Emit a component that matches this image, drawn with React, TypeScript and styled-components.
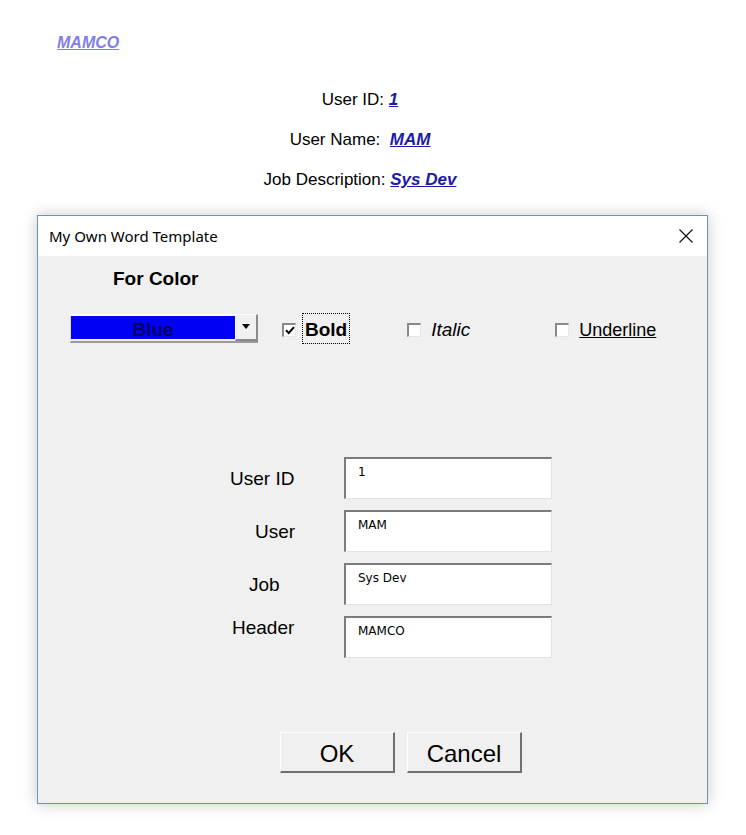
import * as React from 'react'
import styled, { createGlobalStyle } from 'styled-components'

const GlobalStyle = createGlobalStyle`
  html, body {
    margin: 0;
    padding: 0;
    background: #ffffff;
  }
  body {
    font-family: "Liberation Sans", Arial, sans-serif;
    color: #000;
  }
`

const Page = styled.div`
  width: 746px;
  height: 835px;
  overflow: hidden;
`

const Brand = styled.a`
  display: inline-block;
  margin: 33px 0 0 57px;
  line-height: 20px;
  font-size: 16px;
  font-weight: bold;
  font-style: italic;
  color: #7f7fe6;
  text-decoration: underline;
  cursor: pointer;
`

const InfoList = styled.div`
  margin-top: 27px;
  display: flex;
  flex-direction: column;
  align-items: center;
  padding-right: 26px;
`

const InfoLine = styled.div`
  line-height: 40px;
  font-size: 17px;
`

const InfoValue = styled.a`
  color: #1b1ba8;
  font-weight: bold;
  font-style: italic;
  text-decoration: underline;
`

const Dialog = styled.div`
  margin: 15px 0 0 37px;
  width: 669px;
  height: 587px;
  border: 1px solid #6f93b8;
  box-shadow: 0 0 14px rgba(0, 0, 0, 0.22);
  display: flex;
  flex-direction: column;
  background: #f0f0f0;
`

const TitleBar = styled.div`
  height: 40px;
  flex: none;
  background: #ffffff;
  display: flex;
  align-items: center;
  justify-content: space-between;
  padding: 0 13px 0 11px;
  font-family: "Noto Sans", "Open Sans", sans-serif;
  font-size: 15px;
`

const CloseButton = styled.button`
  border: 0;
  background: transparent;
  padding: 0;
  width: 16px;
  height: 16px;
  display: flex;
  cursor: pointer;
`

const DialogBody = styled.div`
  flex: 1;
  display: flex;
  flex-direction: column;
`

const ColorHeading = styled.div`
  margin: 11px 0 0 75px;
  line-height: 24px;
  font-size: 19px;
  font-weight: bold;
`

const OptionsRow = styled.div`
  margin-top: 20px;
  height: 34px;
  display: flex;
  align-items: center;
`

const ComboBox = styled.div`
  margin-left: 32px;
  width: 188px;
  height: 29px;
  box-sizing: border-box;
  display: flex;
  border-top: 2px solid #ffffff;
  border-left: 1px solid #d8d8d8;
  border-bottom: 2px solid #9a9a9a;
`

const ComboValue = styled.div`
  flex: 1;
  height: 23px;
  background: #0000f5;
  color: #000068;
  font-size: 19px;
  font-weight: bold;
  text-align: center;
  line-height: 27px;
  overflow: hidden;
`

const ComboArrow = styled.div`
  width: 23px;
  height: 27px;
  margin-top: -2px;
  box-sizing: border-box;
  background: #f0f0f0;
  border-top: 1px solid #ffffff;
  border-left: 1px solid #ffffff;
  border-right: 2px solid #8a8a8a;
  border-bottom: 2px solid #8a8a8a;
  display: flex;
  align-items: center;
  justify-content: center;
`

const Option = styled.label<{ $gap: number }>`
  margin-left: ${p => p.$gap}px;
  display: flex;
  align-items: center;
  cursor: default;
`

const Box = styled.span`
  width: 14px;
  height: 14px;
  box-sizing: border-box;
  background: #ffffff;
  border-top: 2px solid #8a8a8a;
  border-left: 2px solid #8a8a8a;
  border-right: 1px solid #e6e6e6;
  border-bottom: 1px solid #e6e6e6;
  display: flex;
  align-items: center;
  justify-content: center;
  margin-top: 3px;
`

const OptionText = styled.span<{ $variant: 'bold' | 'italic' | 'underline'; $focused?: boolean }>`
  margin-left: ${p => (p.$focused ? 6 : 7)}px;
  font-size: ${p => (p.$variant === 'underline' ? 18 : 19)}px;
  line-height: 26px;
  padding: 3px 2px 0;
  font-weight: ${p => (p.$variant === 'bold' ? 'bold' : 'normal')};
  font-style: ${p => (p.$variant === 'italic' ? 'italic' : 'normal')};
  text-decoration: ${p => (p.$variant === 'underline' ? 'underline' : 'none')};
  border: 1px dotted ${p => (p.$focused ? '#000' : 'transparent')};
`

const Form = styled.div`
  margin-top: 112px;
  display: grid;
  grid-template-columns: 306px 208px;
  grid-auto-rows: 43px;
  row-gap: 10px;
`

const FieldLabel = styled.label<{ $left: number; $top?: boolean }>`
  padding-left: ${p => p.$left}px;
  align-self: ${p => (p.$top ? 'start' : 'center')};
  font-size: 19px;
  line-height: 24px;
  margin-top: ${p => (p.$top ? '0' : '1px')};
`

const TextField = styled.input`
  box-sizing: border-box;
  width: 208px;
  height: 42px;
  margin: 0;
  background: #ffffff;
  border-top: 2px solid #7c7c7c;
  border-left: 2px solid #7c7c7c;
  border-right: 1px solid #e2e2e2;
  border-bottom: 1px solid #e2e2e2;
  padding: 0 12px 14px;
  font-family: "DejaVu Sans", Tahoma, sans-serif;
  font-size: 12px;
  color: #000;
  outline: none;
`

const ButtonRow = styled.div`
  margin: 73px 0 0 242px;
  display: flex;
  gap: 12px;
`

const DialogButton = styled.button`
  width: 115px;
  height: 41px;
  box-sizing: border-box;
  background: #f0f0f0;
  border-top: 1px solid #ffffff;
  border-left: 1px solid #ffffff;
  border-right: 2px solid #707070;
  border-bottom: 2px solid #707070;
  font-family: "Liberation Sans", Arial, sans-serif;
  font-size: 24px;
  line-height: 24px;
  padding: 4px 0 0;
  color: #000;
  cursor: pointer;
`

const fields = [
  { label: 'User ID', value: '1', left: 192 },
  { label: 'User', value: 'MAM', left: 217 },
  { label: 'Job', value: 'Sys Dev', left: 211 },
  { label: 'Header', value: 'MAMCO', left: 194, top: true },
]

export default function App() {
  const [bold, setBold] = React.useState(true)
  const [italic, setItalic] = React.useState(false)
  const [underline, setUnderline] = React.useState(false)

  const check = (
    <svg width="10" height="9" viewBox="0 0 10 9">
      <path d="M1 4.2 L3.8 7 L9 1.2" fill="none" stroke="#000" strokeWidth="2" />
    </svg>
  )

  return (
    <Page>
      <GlobalStyle />
      <Brand>MAMCO</Brand>
      <InfoList>
        <InfoLine>
          User ID: <InfoValue>1</InfoValue>
        </InfoLine>
        <InfoLine>
          User Name:&nbsp; <InfoValue>MAM</InfoValue>
        </InfoLine>
        <InfoLine>
          Job Description: <InfoValue>Sys Dev</InfoValue>
        </InfoLine>
      </InfoList>

      <Dialog>
        <TitleBar>
          <span>My Own Word Template</span>
          <CloseButton aria-label="Close">
            <svg width="16" height="16" viewBox="0 0 16 16">
              <path d="M1.5 1.5 L14.5 14.5 M14.5 1.5 L1.5 14.5" stroke="#111" strokeWidth="1.2" />
            </svg>
          </CloseButton>
        </TitleBar>
        <DialogBody>
          <ColorHeading>For Color</ColorHeading>
          <OptionsRow>
            <ComboBox>
              <ComboValue>Blue</ComboValue>
              <ComboArrow>
                <svg width="8" height="5" viewBox="0 0 8 5">
                  <path d="M0 0 H8 L4 5 Z" fill="#000" />
                </svg>
              </ComboArrow>
            </ComboBox>
            <Option $gap={24} onClick={() => setBold(!bold)}>
              <Box>{bold && check}</Box>
              <OptionText $variant="bold" $focused>Bold</OptionText>
            </Option>
            <Option $gap={57} onClick={() => setItalic(!italic)}>
              <Box>{italic && check}</Box>
              <OptionText $variant="italic">Italic</OptionText>
            </Option>
            <Option $gap={82} onClick={() => setUnderline(!underline)}>
              <Box>{underline && check}</Box>
              <OptionText $variant="underline">Underline</OptionText>
            </Option>
          </OptionsRow>

          <Form>
            {fields.map(f => (
              <React.Fragment key={f.label}>
                <FieldLabel $left={f.left} $top={f.top}>{f.label}</FieldLabel>
                <TextField defaultValue={f.value} />
              </React.Fragment>
            ))}
          </Form>

          <ButtonRow>
            <DialogButton>OK</DialogButton>
            <DialogButton>Cancel</DialogButton>
          </ButtonRow>
        </DialogBody>
      </Dialog>
    </Page>
  )
}
